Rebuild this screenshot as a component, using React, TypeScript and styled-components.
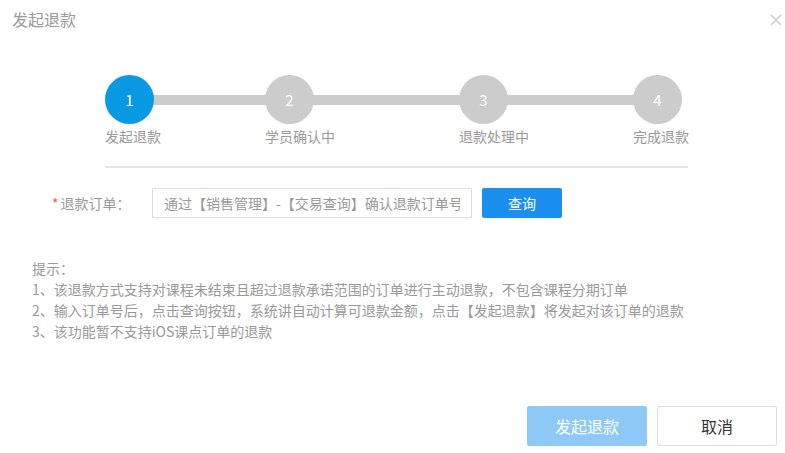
import React, { useState } from "react";
import styled, { createGlobalStyle } from "styled-components";

const GlobalStyle = createGlobalStyle`
  html, body {
    margin: 0;
    padding: 0;
    background: #fff;
  }
  body {
    font-family: "Noto Sans CJK SC", "Liberation Sans", sans-serif;
  }
  * {
    box-sizing: border-box;
  }
`;

const Dialog = styled.div({
  width: 785,
  height: 453,
  background: "#fff",
  display: "flex",
  flexDirection: "column",
});

const Header = styled.div({
  display: "flex",
  alignItems: "center",
  justifyContent: "space-between",
  padding: "7px 3px 0 12px",
  height: 30,
});

const Title = styled.h3({
  margin: 0,
  fontSize: 16,
  fontWeight: 400,
  lineHeight: "22px",
  color: "#999",
});

const Close = styled.button({
  border: 0,
  background: "none",
  padding: 0,
  width: 12,
  height: 12,
  marginTop: 2,
  display: "flex",
  alignItems: "center",
  justifyContent: "center",
  cursor: "pointer",
});

const Steps = styled.div({
  position: "relative",
  display: "grid",
  gridTemplateColumns: "160px 194px 174px 55px",
  margin: "45px 0 0 105px",
  width: 583,
});

const Track = styled.div({
  position: "absolute",
  left: 25,
  right: 30,
  top: 20,
  height: 10,
  background: "#ccc",
});

const Step = styled.div({
  position: "relative",
  display: "flex",
  flexDirection: "column",
  alignItems: "flex-start",
});

const Circle = styled.div<{ $active?: boolean }>((p) => ({
  width: 49,
  height: 49,
  borderRadius: "50%",
  background: p.$active ? "#0a9ae3" : "#ccc",
  color: "#fff",
  fontSize: 15,
  display: "flex",
  alignItems: "center",
  justifyContent: "center",
}));

const StepLabel = styled.span({
  marginTop: 2,
  fontSize: 14,
  lineHeight: "20px",
  color: "#999",
  whiteSpace: "nowrap",
});

const Divider = styled.div({
  margin: "20px 0 0 105px",
  width: 583,
  height: 2,
  background: "#e5e5e5",
});

const FormRow = styled.div({
  display: "flex",
  alignItems: "center",
  margin: "20px 0 0 52px",
});

const Label = styled.label({
  width: 100,
  fontSize: 14,
  color: "#999",
});

const Required = styled.span({
  color: "#f0643c",
  marginRight: 2,
});

const Input = styled.input({
  width: 320,
  height: 30,
  border: "1px solid #ddd",
  padding: "0 11px",
  fontSize: 14,
  fontFamily: "inherit",
  color: "#333",
  outline: "none",
  "&::placeholder": {
    color: "#999",
  },
});

const QueryButton = styled.button({
  marginLeft: 10,
  width: 80,
  height: 30,
  border: 0,
  borderRadius: 2,
  background: "#1a8ff0",
  color: "#fff",
  fontSize: 14,
  fontFamily: "inherit",
  cursor: "pointer",
});

const Tips = styled.div({
  margin: "40px 0 0 32px",
  fontSize: 14,
  lineHeight: "21px",
  color: "#999",
});

const Footer = styled.div({
  marginTop: "auto",
  display: "flex",
  justifyContent: "flex-end",
  gap: 10,
  padding: "0 8px 7px 0",
});

const FooterButton = styled.button<{ $primary?: boolean }>((p) => ({
  width: 120,
  height: 40,
  borderRadius: 2,
  border: p.$primary ? 0 : "1px solid #ddd",
  background: p.$primary ? "#8ec8f6" : "#fff",
  color: p.$primary ? "#fff" : "#333",
  fontSize: 16,
  fontFamily: "inherit",
  cursor: p.$primary ? "not-allowed" : "pointer",
}));

const steps = ["发起退款", "学员确认中", "退款处理中", "完成退款"];

const tips = [
  "提示：",
  "1、该退款方式支持对课程未结束且超过退款承诺范围的订单进行主动退款，不包含课程分期订单",
  "2、输入订单号后，点击查询按钮，系统讲自动计算可退款金额，点击【发起退款】将发起对该订单的退款",
  "3、该功能暂不支持iOS课点订单的退款",
];

function App() {
  const [order, setOrder] = useState("");
  const current = 0;

  return (
    <Dialog>
      <GlobalStyle />
      <Header>
        <Title>发起退款</Title>
        <Close aria-label="关闭">
          <svg width="12" height="12" viewBox="0 0 12 12">
            <path d="M1 1L11 11M11 1L1 11" stroke="#ccc" strokeWidth="1.6" />
          </svg>
        </Close>
      </Header>

      <Steps>
        <Track />
        {steps.map((label, i) => (
          <Step key={label}>
            <Circle $active={i === current}>{i + 1}</Circle>
            <StepLabel>{label}</StepLabel>
          </Step>
        ))}
      </Steps>
      <Divider />

      <FormRow>
        <Label>
          <Required>*</Required>退款订单：
        </Label>
        <Input
          value={order}
          onChange={(e) => setOrder(e.target.value)}
          placeholder="通过【销售管理】-【交易查询】确认退款订单号"
        />
        <QueryButton>查询</QueryButton>
      </FormRow>

      <Tips>
        {tips.map((t) => (
          <div key={t}>{t}</div>
        ))}
      </Tips>

      <Footer>
        <FooterButton $primary disabled>
          发起退款
        </FooterButton>
        <FooterButton>取消</FooterButton>
      </Footer>
    </Dialog>
  );
}

export default App;
